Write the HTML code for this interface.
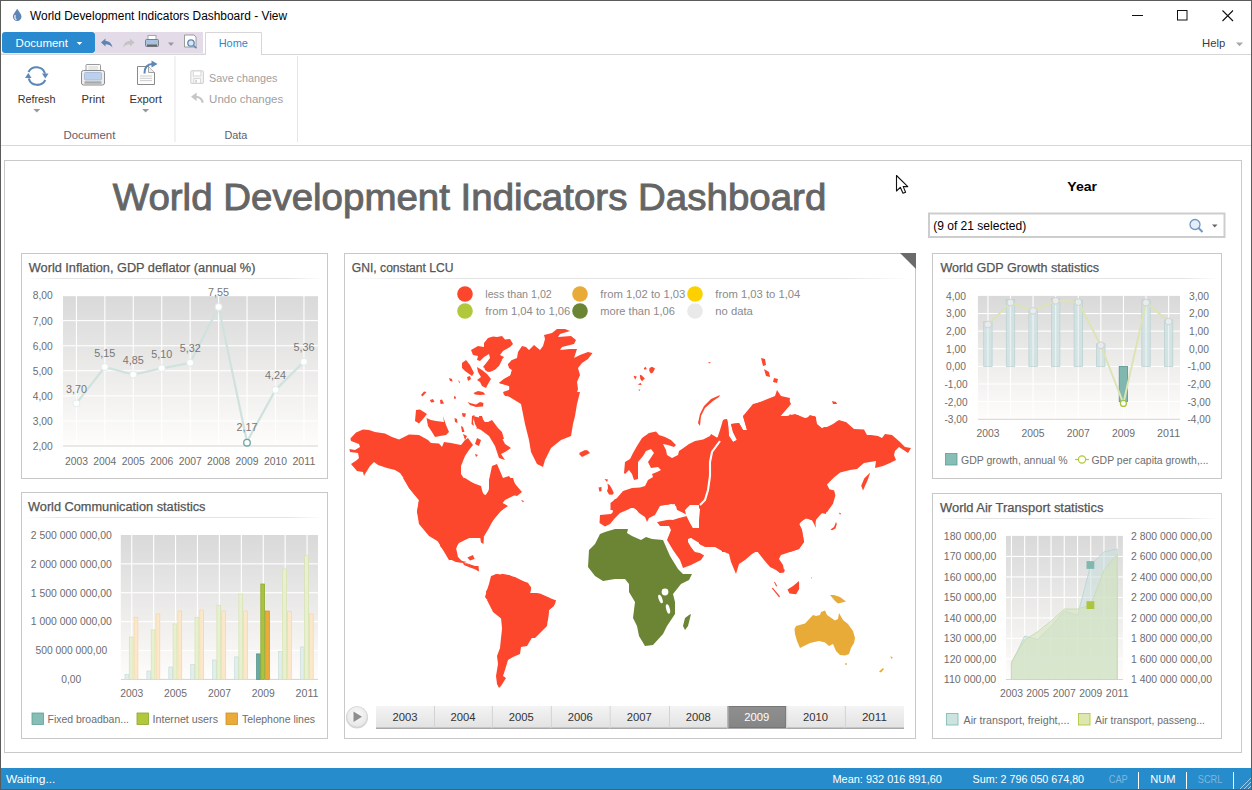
<!DOCTYPE html>
<html><head><meta charset="utf-8">
<style>
*{margin:0;padding:0;box-sizing:border-box}
html,body{width:1252px;height:790px;overflow:hidden;background:#fff;font-family:"Liberation Sans",sans-serif;position:relative}
.a{position:absolute}
svg text{font-family:"Liberation Sans",sans-serif}
</style></head>
<body>
<svg class="a" style="left:0;top:0" width="1252" height="790" viewBox="0 0 1252 790">
<defs>
<linearGradient id="pg" x1="0" y1="0" x2="0" y2="1"><stop offset="0" stop-color="#d9d9d9"/><stop offset="1" stop-color="#fefdfb"/></linearGradient>
<linearGradient id="hl" x1="0" y1="0" x2="1" y2="0"><stop offset="0" stop-color="#e4e4e4" stop-opacity="0"/><stop offset="0.12" stop-color="#e4e4e4"/><stop offset="0.88" stop-color="#e4e4e4"/><stop offset="1" stop-color="#e4e4e4" stop-opacity="0"/></linearGradient>
<linearGradient id="btn" x1="0" y1="0" x2="0" y2="1"><stop offset="0" stop-color="#f4f4f4"/><stop offset="1" stop-color="#e2e2e2"/></linearGradient>
<linearGradient id="btns" x1="0" y1="0" x2="0" y2="1"><stop offset="0" stop-color="#8f8f8f"/><stop offset="1" stop-color="#858585"/></linearGradient>
<radialGradient id="play" cx="0.5" cy="0.4" r="0.6"><stop offset="0" stop-color="#fafafa"/><stop offset="1" stop-color="#e6e6e6"/></radialGradient>
</defs>

<!-- ===== window chrome ===== -->
<rect x="0.5" y="0.5" width="1251" height="789" fill="none" stroke="#5b5b5b"/>
<path d="M17.2,8.8 C15.3,11.8 12.9,14.5 12.9,16.6 A4.3,4.3 0 0 0 21.5,16.6 C21.5,14.5 19.1,11.8 17.2,8.8Z" fill="#5d86b6"/>
<path d="M15.2,15 C14.5,17 15,18.8 16.4,19.8" stroke="#e1ebf5" stroke-width="1.3" fill="none"/>
<text x="30" y="20.4" font-size="12" fill="#000" textLength="257" lengthAdjust="spacingAndGlyphs">World Development Indicators Dashboard - View</text>
<rect x="1132" y="15" width="11" height="1" fill="#111"/>
<rect x="1177.5" y="10.5" width="9.5" height="9.5" fill="none" stroke="#111"/>
<path d="M1222.5,10.5 L1233,21 M1233,10.5 L1222.5,21" stroke="#111" stroke-width="1.1"/>

<!-- QAT -->
<rect x="95" y="32" width="108" height="21" fill="#e3dbe7"/>
<rect x="2" y="32" width="93" height="21" rx="3" fill="#2a8ad0"/>
<text x="15.6" y="46.7" font-size="11.5" fill="#fff" textLength="52.3" lengthAdjust="spacingAndGlyphs">Document</text>
<path d="M76.7,42 L82.3,42 L79.5,45Z" fill="#fff"/>
<rect x="1" y="53" width="204" height="1" fill="#ececec"/>
<!-- undo / redo / print / preview -->
<path d="M101,42.5 L105.5,38.5 L105.5,41 C109,41 111.5,43 112.5,47.5 C110.5,45 108.5,44.3 105.5,44.3 L105.5,46.5Z" fill="#5c84b4"/>
<path d="M134.5,42.5 L130,38.5 L130,41 C126.5,41 124,43 123,47.5 C125,45 127,44.3 130,44.3 L130,46.5Z" fill="#c4c4c4"/>
<rect x="148" y="35.5" width="8" height="4" fill="#fff" stroke="#999" stroke-width="0.8"/>
<rect x="145.5" y="39.5" width="13" height="7" rx="1" fill="#a9c2e2" stroke="#777" stroke-width="0.9"/>
<rect x="147" y="44.5" width="10" height="2" fill="#666"/>
<path d="M168,42.5 L174,42.5 L171,46Z" fill="#9a9a9a"/>
<path d="M184.5,35 L194,35 L196,37 L196,47 L184.5,47Z" fill="#fff" stroke="#888" stroke-width="0.8"/>
<circle cx="191" cy="43" r="3.2" fill="#dbe6f3" stroke="#5c84b4" stroke-width="1.3"/>
<path d="M193.3,45.3 L196.5,48.3" stroke="#5c84b4" stroke-width="1.5"/>
<!-- Home tab -->
<path d="M205.5,55 L205.5,32.5 L261.5,32.5 L261.5,55" fill="#fff" stroke="#d6d6d6"/>
<text x="218.7" y="46.9" font-size="11.5" fill="#2a8ad0" textLength="29.2" lengthAdjust="spacingAndGlyphs">Home</text>
<rect x="262" y="54" width="989" height="1" fill="#d6d6d6"/>
<rect x="1" y="54" width="204" height="1" fill="#d6d6d6"/>
<text x="1202.1" y="47.3" font-size="11.5" fill="#3d3d3d" textLength="23.2" lengthAdjust="spacingAndGlyphs">Help</text>
<path d="M1236,42.5 L1243,42.5 L1239.5,46.2Z" fill="#a8a8a8"/>

<!-- ribbon -->
<rect x="1" y="145" width="1250" height="1" fill="#d9d9d9"/>
<rect x="174.5" y="56" width="1" height="86" fill="#e6e6e6"/>
<rect x="297" y="56" width="1" height="86" fill="#e6e6e6"/>
<!-- refresh icon -->
<g fill="none" stroke="#5b87b9" stroke-width="2.1">
<path d="M28.5,72 A9,9 0 0 1 45,73.5"/>
<path d="M45.3,80 A9,9 0 0 1 28.7,78.5"/>
</g>
<path d="M42,73.5 L48.5,73.5 L45.3,78.5Z" fill="#5b87b9"/>
<path d="M25,78 L31.6,78 L28.3,73Z" fill="#5b87b9"/>
<!-- print icon -->
<rect x="86" y="64.5" width="14.5" height="8" rx="0.8" fill="#fafafa" stroke="#9a9a9a"/>
<path d="M88.5,67 H98 M88.5,69 H98" stroke="#c2c2c2" stroke-width="0.7"/>
<rect x="81.5" y="70.5" width="23" height="14.5" rx="2" fill="#eeeeee" stroke="#8c8c8c"/>
<rect x="84.5" y="72.5" width="17" height="7.5" rx="1" fill="#bcd0ec" stroke="#9fb6d8" stroke-width="0.8"/>
<rect x="84.5" y="81.3" width="17" height="2.4" fill="#a9a9a9"/>
<!-- export icon -->
<path d="M137.5,66.5 L148.5,66.5 L154.5,72.5 L154.5,84.5 L137.5,84.5Z" fill="#fdfdfd" stroke="#8a8a8a"/>
<path d="M148.5,66.5 L148.5,72.5 L154.5,72.5" fill="#eee" stroke="#8a8a8a" stroke-width="0.8"/>
<path d="M140,76 H152 M140,78.3 H152 M140,80.6 H152" stroke="#c0c0c0" stroke-width="0.8"/>
<path d="M144.5,73.5 C144.5,67.5 147.5,64 152.5,64" fill="none" stroke="#5b87b9" stroke-width="2"/>
<path d="M151.5,60.5 L157.5,64 L151.5,67.5Z" fill="#5b87b9"/>
<text x="17.7" y="102.7" font-size="11.5" fill="#333" textLength="37.7" lengthAdjust="spacingAndGlyphs">Refresh</text>
<text x="81.6" y="102.7" font-size="11.5" fill="#333" textLength="23" lengthAdjust="spacingAndGlyphs">Print</text>
<text x="129.5" y="102.7" font-size="11.5" fill="#333" textLength="32.5" lengthAdjust="spacingAndGlyphs">Export</text>
<path d="M33.3,109 L40.3,109 L36.8,112.5Z" fill="#9a9a9a"/>
<path d="M142.1,109 L149.1,109 L145.6,112.5Z" fill="#9a9a9a"/>
<text x="63.4" y="138.5" font-size="11.5" fill="#5f6070" textLength="52" lengthAdjust="spacingAndGlyphs">Document</text>
<text x="224.4" y="138.5" font-size="11.5" fill="#5f6070" textLength="23" lengthAdjust="spacingAndGlyphs">Data</text>
<!-- save / undo small icons -->
<rect x="190.8" y="70.8" width="12.6" height="12.6" rx="1.2" fill="#f6f6f6" stroke="#d3d3d3" stroke-width="1.1"/>
<rect x="193.3" y="71" width="7.6" height="5" fill="#fff" stroke="#d3d3d3" stroke-width="0.9"/>
<rect x="193.8" y="78.6" width="6.8" height="4.6" fill="#fff" stroke="#d3d3d3" stroke-width="0.9"/>
<rect x="195.2" y="79.8" width="1.8" height="2.8" fill="#d3d3d3"/>
<path d="M191,96.8 L196.6,92.6 L196.6,101Z" fill="#c6c6c6"/>
<path d="M195.5,96.8 C199.5,96.8 202,99.3 202.8,102.8" fill="none" stroke="#c6c6c6" stroke-width="2.1"/>
<text x="209.1" y="81.8" font-size="11.5" fill="#a0a0a0" textLength="68.2" lengthAdjust="spacingAndGlyphs">Save changes</text>
<text x="209.1" y="102.7" font-size="11.5" fill="#a0a0a0" textLength="74.1" lengthAdjust="spacingAndGlyphs">Undo changes</text>

<!-- ===== dashboard ===== -->
<rect x="4.5" y="160.5" width="1237" height="592" fill="none" stroke="#c9c9c9"/>
<text x="112.8" y="209.7" font-size="36.5" fill="#656565" stroke="#656565" stroke-width="0.9" textLength="713.5" lengthAdjust="spacingAndGlyphs">World Development Indicators Dashboard</text>
<text x="1067.3" y="190.9" font-size="13" fill="#000" font-weight="bold" textLength="29.7" lengthAdjust="spacingAndGlyphs">Year</text>
<rect x="929" y="213.5" width="295.5" height="23.5" fill="#fff" stroke="#cdcdcd" stroke-width="2"/>
<text x="933.2" y="230" font-size="12" fill="#000" textLength="93" lengthAdjust="spacingAndGlyphs">(9 of 21 selected)</text>
<circle cx="1195" cy="224.5" r="5" fill="#e6edf6" stroke="#6f97c6" stroke-width="1.3"/>
<path d="M1198.5,228 L1202.5,232" stroke="#6f97c6" stroke-width="1.9"/>
<path d="M1212,224.5 L1217.5,224.5 L1214.75,227.5Z" fill="#666"/>

<!-- panel frames -->
<rect x="21.5" y="253.5" width="306" height="225" fill="#fff" stroke="#c8c8c8"/>
<rect x="21.5" y="492.5" width="306" height="246" fill="#fff" stroke="#c8c8c8"/>
<rect x="344.5" y="253.5" width="571" height="485" fill="#fff" stroke="#c8c8c8"/>
<rect x="932.5" y="253.5" width="289" height="225" fill="#fff" stroke="#c8c8c8"/>
<rect x="932.5" y="493.5" width="289" height="245" fill="#fff" stroke="#c8c8c8"/>
<rect x="25" y="278" width="299" height="1" fill="url(#hl)"/>
<rect x="25" y="517" width="299" height="1" fill="url(#hl)"/>
<rect x="348" y="278" width="564" height="1" fill="url(#hl)"/>
<rect x="936" y="278" width="282" height="1" fill="url(#hl)"/>
<rect x="936" y="518" width="282" height="1" fill="url(#hl)"/>
<text x="28.8" y="272" font-size="12" fill="#555" stroke="#555" stroke-width="0.25" textLength="226.6" lengthAdjust="spacingAndGlyphs">World Inflation, GDP deflator (annual %)</text>
<text x="28" y="511.1" font-size="12" fill="#555" stroke="#555" stroke-width="0.25" textLength="177.5" lengthAdjust="spacingAndGlyphs">World Communication statistics</text>
<text x="351.8" y="272" font-size="12" fill="#555" stroke="#555" stroke-width="0.25" textLength="101.7" lengthAdjust="spacingAndGlyphs">GNI, constant LCU</text>
<text x="940.5" y="272" font-size="12" fill="#555" stroke="#555" stroke-width="0.25" textLength="158.5" lengthAdjust="spacingAndGlyphs">World GDP Growth statistics</text>
<text x="940" y="512" font-size="12" fill="#555" stroke="#555" stroke-width="0.25" textLength="163.4" lengthAdjust="spacingAndGlyphs">World Air Transport statistics</text>
<path d="M900,253 L916,253 L916,269Z" fill="#6b6b6b"/>

<path fill="#fd472d" d="M350.4,438.4 356,432.4 363,429.4 369,430 375,432 385,433.4 392,437 399,439.4 409,434.4 419,435 428,440 431,443 439,443.4 442,447 444,442 451,443 461,445 465,440 468,438 473,445 469,450 465,456 461,466 461,474 465,480 481,486 483,494 488,496 489,488 489,480 492,466 497,464 503,478 509,476 515,484 522,492 517,496 509,494 501,502 508,506 499,512 493,520 489,528 483,538 469,538 457,544 453,560 449,560 437,540 429,534 421,520 417,512 419,500 418,499 409,488 405,480 400,473 395,470 387,468 378,465 374,462 370,466 365,474 364,476 363,472 357,471 351,464 357,460 359,458 358,453 350,452 349.4,449 355,450 360,447 359,444 351,441Z"/><path fill="#fd472d" d="M473,416 481,418 485,422 493,426 501,436 505,444 511,448 505,452 501,454 505,460 499,458 495,446 489,436 481,430 477,428 475,424Z"/><path fill="#fd472d" d="M477,438 481,440 479,446 475,444Z"/><path fill="#fd472d" d="M475,454 478,455 476,457Z"/><path fill="#fd472d" d="M463,434 467,436 465,440Z"/><path fill="#fd472d" d="M521,500 524,501 523,502.4Z"/><path fill="#fd472d" d="M462,363 466,360 470,365 474,373 472,376 465,371 462,368Z"/><path fill="#fd472d" d="M484,366 490,362 496,360 502,360 499,366 494,370 488,372 485,370Z"/><path fill="#fd472d" d="M477,367 482,370 487,374 491,379 488,384 486,388 482,386 480,382 477,380 481,377 478,372Z"/><path fill="#fd472d" d="M467,377 470,376 471,379 468,381Z"/><path fill="#fd472d" d="M449,378 452,379 452.5,381.5 450,381Z"/><path fill="#fd472d" d="M458,380 460,382 459.5,383.5Z"/><path fill="#fd472d" d="M473.5,393 478,391 483,392 485.5,394.5 480,395 475,394.5Z"/><path fill="#fd472d" d="M467.5,402 470,403 476,404.5 480,402 483.5,403 483,406.5 476,407 470,405Z"/><path fill="#fd472d" d="M430,400 433,399 434.5,402 431,402.5Z"/><path fill="#fd472d" d="M440,400 442,399.5 444,403.5 440.5,404Z"/><path fill="#fd472d" d="M421,395 424,391.5 426.5,392 422.5,396.5Z"/><path fill="#fd472d" d="M454,396 456,397 455.5,399 454,398.5Z"/><path fill="#fd472d" d="M416,410 420,409.5 427,414 423,419 419,423.5 415,421Z"/><path fill="#fd472d" d="M426.5,418 431,420 436,421 444,422 443,416 446,425 449,432 446,435 440,436 435,437 432,432 428,426Z"/><path fill="#fd472d" d="M462,413 466,413.5 465,417 462.5,416.5Z"/><path fill="#fd472d" d="M454.5,418 457,419 457.5,423 455,422Z"/><path fill="#fd472d" d="M461,426 463,427 464.5,432 462,432Z"/><path fill="#fd472d" d="M472,416 474.5,415 473,422 474,426 471.5,424Z"/><path fill="#fd472d" d="M479,416 482,416 484,422 488,422 492,420 498,428 502,432 504,439 495,439 490,432 485,429 479,428 476,429 480,425Z"/><path fill="#fd472d" d="M508,364 512,360 525,360 525,408 520,400 516,397 505,396 504,392 510,390 509,386 499,383 504,379 511,375 512,370 509,368Z"/><path fill="#fd472d" d="M403,478 409,488 419,500 417,512 419,524 429,536 439,542 447,554 448,558 457,562 465,563 473,567 478,571 475,566 469,564 463,562 458,557 456,548 460,541 469,538 479,538 483,536 489,526 495,518 501,511 507,506 501,505 505,500 513,496 521,492 515,484 513,478 493,478 489,490 485,496 481,490 473,483 465,478Z"/><path fill="#fd472d" d="M480,536.4 484,537.2 483.4,544 481,542.4Z"/><path fill="#fd472d" d="M467.4,557.6 473,555 474.6,559 470,560.4Z"/><path fill="#fd472d" d="M462.5,562.2 468,564.2 473,566 478.5,566 479,571.5 475,569.2 470,567.6 464,565Z"/><path fill="#fd472d" d="M440,540 440,546 447,553 448.5,558.5 456,562 463,562.8 467,562 460,560.5 457,557 456,550 457,543Z"/><path fill="#fd472d" d="M491,578.5 494.5,574.8 496.5,574 500,575.2 502,573.8 510,575.2 518,580 528,582.8 531.2,588 530,593.5 540,593.5 551,598.5 486,598.5 486.2,591 491.5,585Z"/><path fill="#fd472d" d="M471,350 478,346 484,347 484,343 488,338 493,336.5 497,337 502,336 505,339.5 510,339 513,344 510,347 503,351 500,355 504,357 500,362 496,369 490,372 483,367 487,362 490,358 489,354 484,357 480,361 477,360 478,356 473,355Z"/><path fill="#fd472d" d="M508,365 512,360 517,358 518,352 522,346 526,347 529,350 534,345 540,350 543,346 545,339 544,335 552,333 557,329 565,329 570,331 560,334 558,337 571,336 576,340 574,344 562,347 560,350 570,349 577,349 574,358 580,355 588,352 592.5,353 588,359 582,363 578,368 580,375 577,382 578,389 576,396 578,399 516,399 512,396 504,395 503,392 509,390 510,386 499,383 504,379 510,376 512,370Z"/><path fill="#fd472d" d="M505,394 580,392 577,404 575,416 573,424 571,436 561,440 551,448 545,460 543,467 537,464 531,452 529,440 525,424 521,404Z"/><path fill="#fd472d" d="M579,454 587,450 590,453 582,457Z"/><path fill="#fd472d" d="M491,576 497,574 505,575 515,577 525,582 531,587 530,593 537,593 547,597 555,600 554,606 549,610 548,618 547,626 535,638 503,638 501,618 495,612 489,602 485,597 487,590 489,584Z"/><path fill="#fd472d" d="M487,600 556,600 555,604 549,610 548,620 543,626 535,629 533,636 527,646 521,647 520,654 513,657 508,660 505,670 503,676 506,678 501,686 499,688 497,684 496,676 498,664 497,656 500,648 501,638 503,620 493,612 489,604Z"/><path fill="#fd472d" d="M708,362 711,362.4 709.4,363.6Z"/><path fill="#fd472d" d="M761,358 765,359 766,365 763,366Z"/><path fill="#fd472d" d="M764,369 769,372 770,377 766,376Z"/><path fill="#fd472d" d="M774,378 778,379 777,383 773,382Z"/><path fill="#fd472d" d="M832,401 836,402 837,404 833,404Z"/><path fill="#fd472d" d="M649.5,368 652,366.8 655,368.5 653,372.5 651,373.5 649.2,371Z"/><path fill="#fd472d" d="M643.8,368.2 645.5,366.8 646.8,369 644.5,369.7Z"/><path fill="#fd472d" d="M633.5,375.8 636.8,376.5 635.2,379.8Z"/><path fill="#fd472d" d="M639.8,374.8 641.5,375.3 644.8,378.5 642,381.2 640.3,379Z"/><path fill="#fd472d" d="M637.8,384.7 640.5,382.8 641.7,385Z"/><path fill="#fd472d" d="M638.2,389.8 640.2,389.6 639.7,391Z"/><path fill="#fd472d" d="M720,395 711,399 704,406 700,414 698,423 700,426 701,416 705,408 713,401 719,397Z"/><path fill="#fd472d" d="M715,440 723,432 723,420 727,419 728,424 729,436 733,442 737,440 733,432 731,424 739,423 743,430 747,430 743,416 753,412 755,404 765,400 775,396 777,390 781,396 790,398 789,406 779,416 787,416 795,414 805,418 815,416 817,424 823,429 833,424 839,420 845,422 847,424 847,460 835,468 815,480 715,480Z"/><path fill="#fd472d" d="M624,473 625,462 630,459 633,453 637,446 642,438 649,433 656,431.5 659,435 665,437 671,440 676,445 674,447 668,445 663,444 666,450 667,455 672,458 678,455 679,451 682,449 689,444 695,441 703,439.5 710,436 711,434 721,440 721,510 700,510 700,505 687,505 685,510 675,510 675,504 659,505 657,510 637,510 632,507 626,510 610.5,510 610.5,503 617,498 623,491 632,488 640,487.5 645,486 648,480 653,477 652,474 657,472 661,470 658,467 651,468 648,462 654,453 651,449 646,451 643,456 638,462 638,470 638,479 634,480 632,474 629,470 625,474Z"/><path fill="#fd472d" d="M604.5,479 608,479.5 607,482Z"/><path fill="#fd472d" d="M598.5,487.5 601.5,487 601.5,491 599.5,491.8Z"/><path fill="#fd472d" d="M607.5,483.5 610,485.5 612,489 613.8,493 612.5,494.8 609,494.5 607,491 608,488Z"/><path fill="#fd472d" d="M579,453 585,450 589,452 583,456Z"/><path fill="#fd472d" d="M600,515 611,514 613,512 611,504 615,499 706,499 703,502 701,504 690,505 685,510 686,515 683,513 679,511 674,509 675,504 665,505 660,506 655,515 649,518 647,522 645,517 639,513 635,508 631,508 627,510 620,513 615,518 610,524 605,526.5 599.5,523Z"/><path fill="#fd472d" d="M657,522 665,519 673,520 681,517 686,515 690,523 693,528 699,528 700,520 699,515 696,512 701,508 703,502 706,500 721,500 721,547 705,546 701,544 691,538 688,540 690,545 694,551 701,552 705,554 701,560 691,565 683,568 680,560 673,550 667,540 671,530 669,526 660,526Z"/><path fill="#fd472d" d="M699,500 826,500 826,514 822,513 815,520 816,528 812,520 805,518 799,524 802,530 804,542 799,549 790,552 781,555 779,559 783,565 784,570 780,573 776,570 770,567 764,560 757,551 752,554 745,560 739,564 736,574 731,562 729,554 722,551 715,547 705,547 699,544Z"/><path fill="#fd472d" d="M715,445 720,430 723,420 727,419 728,424 729,436 733,442 737,440 733,432 731,424 739,423 743,430 747,430 743,416 753,404 769,400 789,400 791,404 779,418 789,416 790,414 792,416 798,415 802,418 807,418 810,415 816,417 816.5,424 821,429 824,427 832,427.5 837,421 846,422 854,429 864,429.5 867,435 871,435 878,436 882,438 885,434 892,435 900,442 905,447 911,448 908,453 905,451 899,447 895,451 894,455 896,460 890,463 883,466 875,468 876,461 870,462 864,463 857,469 850,470 840.2,472.5 834.2,477.3 827,484.5 829.4,489.3 834.2,490.5 835.4,495.4 833,503.8 827,512.2 821,513.4 816.2,519.4 815,524.2 812.5,520.6 806.5,518.2 800.5,521.8 799.3,524.2 801.7,529 804,542 799,549 790,552 700,552 700,445Z"/><path fill="#fd472d" d="M870.2,472.5 867.8,479.7 863,490.5 861.2,485.7 864.2,478.5Z"/><path fill="#fd472d" d="M830.5,529.5 834,527 836,522 836.8,524 835.5,528.5 832,530.2Z"/><path fill="#fd472d" d="M838.8,512.5 841.2,513.5 840,514.8Z"/><path fill="#fd472d" d="M777,569.5 785,569.5 784,572.5 780,573Z"/><path fill="#fd472d" d="M771.8,588.2 772.8,587.8 780,596.2 779.2,597.5Z"/><path fill="#fd472d" d="M774,582 774.8,581.8 777.2,586 776.2,586.6Z"/><path fill="#fd472d" d="M787.5,589.5 793,586 799,581 799.2,589 796,594.2 789.5,593.5Z"/><path fill="#fd472d" d="M811,577.5 812,577.5 811.8,578.8Z"/><path fill="#6b8535" d="M595,544 600,534 605,532 615,529 628,529 627,533 632,536 641,540 646,537 652,539 663,540 670,556 678,569 683,574 692,574 689,580 681,584 673,594 675,602 675,614 667,626 663,634 653,645 645,646 639,636 637,626 633,618 634,610 635,602 629,592 629,584 625,579 615,579 603,581 595,576 588,567 589,550Z"/><path fill="#6b8535" d="M685,618 689,615 691,614 688,626 685,630 683,626Z"/><path fill="#e8ab37" d="M794.5,629 796,626 805,623.5 813,615 816,616 820,615 821,612 825,610.5 827,615 835,620.5 838,619 839,613 843,620 848,624 853,631 855,638 854,643 851,648 849,654 845,655.5 840,655 836,651 833,644 829,646 825,642.5 819,641 810,643 800,648 797,641 795,634Z"/><path fill="#e8ab37" d="M830,595 834,595 840,597 846,601.5 838,603.5 835,601Z"/><path fill="#e8ab37" d="M879,671.5 883,668 884,669 881,672.5Z"/><path fill="#e8ab37" d="M890.5,656 892.8,657.5 891.2,659Z"/><path fill="#e8ab37" d="M845,663.2 846.8,663.2 846.8,664.8 845,664.8Z"/><path fill="#fff" d="M688,539 691,538 695,542 701,545 705,547 715,547 722,551 722,560 705,556 700,553 695,552 691,547 688,542Z"/><path fill="#fff" d="M657,522 659,512 661,508 671,504 676,506 677,510 685,514 687,516 679,518 667,520Z"/><path fill="#fff" d="M687,508 695,505 700,509 699,520 699,528 693,528 689,520 686,514Z"/><polyline points="720,441 712,452 710,462 710,476 708,490 705,500 700,505" fill="none" stroke="#fff" stroke-width="2.1"/><ellipse cx="665" cy="592" rx="3.4" ry="3.4" fill="#fff"/><ellipse cx="660.5" cy="599" rx="1.8" ry="4.5" fill="#fff" transform="rotate(-20 660.5 599)"/><ellipse cx="668" cy="609" rx="1.8" ry="4.8" fill="#fff" transform="rotate(-15 668 609)"/>
<rect x="63.0" y="295.6" width="255.0" height="150.4" fill="url(#pg)"/>
<rect x="63.0" y="420.4" width="255.0" height="1.1" fill="#fff"/>
<rect x="63.0" y="395.3" width="255.0" height="1.1" fill="#fff"/>
<rect x="63.0" y="370.2" width="255.0" height="1.1" fill="#fff"/>
<rect x="63.0" y="345.2" width="255.0" height="1.1" fill="#fff"/>
<rect x="63.0" y="320.1" width="255.0" height="1.1" fill="#fff"/>
<rect x="63.0" y="295.1" width="255.0" height="1.1" fill="#fff"/>
<rect x="75.9" y="295.6" width="1.1" height="150.4" fill="#fff"/>
<rect x="104.3" y="295.6" width="1.1" height="150.4" fill="#fff"/>
<rect x="132.7" y="295.6" width="1.1" height="150.4" fill="#fff"/>
<rect x="161.2" y="295.6" width="1.1" height="150.4" fill="#fff"/>
<rect x="189.6" y="295.6" width="1.1" height="150.4" fill="#fff"/>
<rect x="218.1" y="295.6" width="1.1" height="150.4" fill="#fff"/>
<rect x="246.5" y="295.6" width="1.1" height="150.4" fill="#fff"/>
<rect x="274.9" y="295.6" width="1.1" height="150.4" fill="#fff"/>
<rect x="303.4" y="295.6" width="1.1" height="150.4" fill="#fff"/>
<rect x="63.0" y="445.5" width="255.0" height="1" fill="#d4d4d4"/>
<text x="52.7" y="299.4" font-size="10.5" fill="#6d6d6d" text-anchor="end" textLength="20.0" lengthAdjust="spacingAndGlyphs">8,00</text>
<text x="52.7" y="324.5" font-size="10.5" fill="#6d6d6d" text-anchor="end" textLength="20.0" lengthAdjust="spacingAndGlyphs">7,00</text>
<text x="52.7" y="349.5" font-size="10.5" fill="#6d6d6d" text-anchor="end" textLength="20.0" lengthAdjust="spacingAndGlyphs">6,00</text>
<text x="52.7" y="374.6" font-size="10.5" fill="#6d6d6d" text-anchor="end" textLength="20.0" lengthAdjust="spacingAndGlyphs">5,00</text>
<text x="52.7" y="399.7" font-size="10.5" fill="#6d6d6d" text-anchor="end" textLength="20.0" lengthAdjust="spacingAndGlyphs">4,00</text>
<text x="52.7" y="424.7" font-size="10.5" fill="#6d6d6d" text-anchor="end" textLength="20.0" lengthAdjust="spacingAndGlyphs">3,00</text>
<text x="52.7" y="449.8" font-size="10.5" fill="#6d6d6d" text-anchor="end" textLength="20.0" lengthAdjust="spacingAndGlyphs">2,00</text>
<polyline points="76.4,403.4 104.8,367.0 133.3,374.6 161.7,368.3 190.2,362.8 218.6,306.9 247.0,441.7 275.5,389.9 303.9,361.8" fill="none" stroke="#cfe2de" stroke-width="2.2" stroke-linejoin="round"/>
<circle cx="76.4" cy="403.4" r="3.5" fill="#fff" stroke="#e2ecea" stroke-width="1"/>
<text x="76.4" y="392.9" font-size="10.5" fill="#777" text-anchor="middle" textLength="21.0" lengthAdjust="spacingAndGlyphs">3,70</text>
<circle cx="104.8" cy="367.0" r="3.5" fill="#fff" stroke="#e2ecea" stroke-width="1"/>
<text x="104.8" y="356.5" font-size="10.5" fill="#777" text-anchor="middle" textLength="21.0" lengthAdjust="spacingAndGlyphs">5,15</text>
<circle cx="133.3" cy="374.6" r="3.5" fill="#fff" stroke="#e2ecea" stroke-width="1"/>
<text x="133.3" y="364.1" font-size="10.5" fill="#777" text-anchor="middle" textLength="21.0" lengthAdjust="spacingAndGlyphs">4,85</text>
<circle cx="161.7" cy="368.3" r="3.5" fill="#fff" stroke="#e2ecea" stroke-width="1"/>
<text x="161.7" y="357.8" font-size="10.5" fill="#777" text-anchor="middle" textLength="21.0" lengthAdjust="spacingAndGlyphs">5,10</text>
<circle cx="190.2" cy="362.8" r="3.5" fill="#fff" stroke="#e2ecea" stroke-width="1"/>
<text x="190.2" y="352.3" font-size="10.5" fill="#777" text-anchor="middle" textLength="21.0" lengthAdjust="spacingAndGlyphs">5,32</text>
<circle cx="218.6" cy="306.9" r="3.5" fill="#fff" stroke="#e2ecea" stroke-width="1"/>
<text x="218.6" y="296.4" font-size="10.5" fill="#777" text-anchor="middle" textLength="21.0" lengthAdjust="spacingAndGlyphs">7,55</text>
<circle cx="247.0" cy="442.7" r="3.3" fill="#fff" stroke="#69a7a0" stroke-width="1.3"/>
<text x="247.0" y="431.2" font-size="10.5" fill="#777" text-anchor="middle" textLength="21.0" lengthAdjust="spacingAndGlyphs">2,17</text>
<circle cx="275.5" cy="389.9" r="3.5" fill="#fff" stroke="#e2ecea" stroke-width="1"/>
<text x="275.5" y="379.4" font-size="10.5" fill="#777" text-anchor="middle" textLength="21.0" lengthAdjust="spacingAndGlyphs">4,24</text>
<circle cx="303.9" cy="361.8" r="3.5" fill="#fff" stroke="#e2ecea" stroke-width="1"/>
<text x="303.9" y="351.3" font-size="10.5" fill="#777" text-anchor="middle" textLength="21.0" lengthAdjust="spacingAndGlyphs">5,36</text>
<text x="76.4" y="465.3" font-size="10.5" fill="#6d6d6d" text-anchor="middle" textLength="23.0" lengthAdjust="spacingAndGlyphs">2003</text>
<text x="104.8" y="465.3" font-size="10.5" fill="#6d6d6d" text-anchor="middle" textLength="23.0" lengthAdjust="spacingAndGlyphs">2004</text>
<text x="133.3" y="465.3" font-size="10.5" fill="#6d6d6d" text-anchor="middle" textLength="23.0" lengthAdjust="spacingAndGlyphs">2005</text>
<text x="161.7" y="465.3" font-size="10.5" fill="#6d6d6d" text-anchor="middle" textLength="23.0" lengthAdjust="spacingAndGlyphs">2006</text>
<text x="190.2" y="465.3" font-size="10.5" fill="#6d6d6d" text-anchor="middle" textLength="23.0" lengthAdjust="spacingAndGlyphs">2007</text>
<text x="218.6" y="465.3" font-size="10.5" fill="#6d6d6d" text-anchor="middle" textLength="23.0" lengthAdjust="spacingAndGlyphs">2008</text>
<text x="247.0" y="465.3" font-size="10.5" fill="#6d6d6d" text-anchor="middle" textLength="23.0" lengthAdjust="spacingAndGlyphs">2009</text>
<text x="275.5" y="465.3" font-size="10.5" fill="#6d6d6d" text-anchor="middle" textLength="23.0" lengthAdjust="spacingAndGlyphs">2010</text>
<text x="303.9" y="465.3" font-size="10.5" fill="#6d6d6d" text-anchor="middle" textLength="23.0" lengthAdjust="spacingAndGlyphs">2011</text>
<rect x="120.8" y="535.0" width="197.2" height="144.4" fill="url(#pg)"/>
<rect x="120.8" y="563.3" width="197.2" height="1.1" fill="#fff"/>
<rect x="120.8" y="592.2" width="197.2" height="1.1" fill="#fff"/>
<rect x="120.8" y="621.1" width="197.2" height="1.1" fill="#fff"/>
<rect x="120.8" y="650.0" width="197.2" height="1.1" fill="#fff"/>
<rect x="131.2" y="535.0" width="1.1" height="144.4" fill="#fff"/>
<rect x="153.1" y="535.0" width="1.1" height="144.4" fill="#fff"/>
<rect x="175.0" y="535.0" width="1.1" height="144.4" fill="#fff"/>
<rect x="196.9" y="535.0" width="1.1" height="144.4" fill="#fff"/>
<rect x="218.8" y="535.0" width="1.1" height="144.4" fill="#fff"/>
<rect x="240.8" y="535.0" width="1.1" height="144.4" fill="#fff"/>
<rect x="262.7" y="535.0" width="1.1" height="144.4" fill="#fff"/>
<rect x="284.6" y="535.0" width="1.1" height="144.4" fill="#fff"/>
<rect x="306.5" y="535.0" width="1.1" height="144.4" fill="#fff"/>
<rect x="120.8" y="678.9" width="197.2" height="1" fill="#d4d4d4"/>
<text x="71.3" y="538.8" font-size="10.5" fill="#6d6d6d" text-anchor="middle" textLength="81.0" lengthAdjust="spacingAndGlyphs">2 500 000 000,00</text>
<text x="71.3" y="567.7" font-size="10.5" fill="#6d6d6d" text-anchor="middle" textLength="81.0" lengthAdjust="spacingAndGlyphs">2 000 000 000,00</text>
<text x="71.3" y="596.6" font-size="10.5" fill="#6d6d6d" text-anchor="middle" textLength="81.0" lengthAdjust="spacingAndGlyphs">1 500 000 000,00</text>
<text x="71.3" y="625.4" font-size="10.5" fill="#6d6d6d" text-anchor="middle" textLength="81.0" lengthAdjust="spacingAndGlyphs">1 000 000 000,00</text>
<text x="71.3" y="654.3" font-size="10.5" fill="#6d6d6d" text-anchor="middle" textLength="71.8" lengthAdjust="spacingAndGlyphs">500 000 000,00</text>
<text x="71.3" y="683.2" font-size="10.5" fill="#6d6d6d" text-anchor="middle" textLength="20.0" lengthAdjust="spacingAndGlyphs">0,00</text>
<rect x="125.0" y="674.3" width="3.8" height="5.1" fill="#e1eeec" stroke="#c9dedb" stroke-width="0.7"/>
<rect x="129.3" y="637.0" width="3.8" height="42.4" fill="#e9f0d2" stroke="#d5e2ac" stroke-width="0.7"/>
<rect x="134.1" y="617.3" width="3.8" height="62.1" fill="#fbe8cb" stroke="#f3d5a6" stroke-width="0.7"/>
<rect x="146.9" y="671.0" width="3.8" height="8.4" fill="#e1eeec" stroke="#c9dedb" stroke-width="0.7"/>
<rect x="151.2" y="629.9" width="3.8" height="49.5" fill="#e9f0d2" stroke="#d5e2ac" stroke-width="0.7"/>
<rect x="156.0" y="614.0" width="3.8" height="65.4" fill="#fbe8cb" stroke="#f3d5a6" stroke-width="0.7"/>
<rect x="168.8" y="667.0" width="3.8" height="12.4" fill="#e1eeec" stroke="#c9dedb" stroke-width="0.7"/>
<rect x="173.1" y="623.9" width="3.8" height="55.5" fill="#e9f0d2" stroke="#d5e2ac" stroke-width="0.7"/>
<rect x="177.9" y="611.0" width="3.8" height="68.4" fill="#fbe8cb" stroke="#f3d5a6" stroke-width="0.7"/>
<rect x="190.7" y="664.4" width="3.8" height="15.0" fill="#e1eeec" stroke="#c9dedb" stroke-width="0.7"/>
<rect x="195.0" y="617.3" width="3.8" height="62.1" fill="#e9f0d2" stroke="#d5e2ac" stroke-width="0.7"/>
<rect x="199.8" y="610.0" width="3.8" height="69.4" fill="#fbe8cb" stroke="#f3d5a6" stroke-width="0.7"/>
<rect x="212.6" y="660.0" width="3.8" height="19.4" fill="#e1eeec" stroke="#c9dedb" stroke-width="0.7"/>
<rect x="216.9" y="605.2" width="3.8" height="74.2" fill="#e9f0d2" stroke="#d5e2ac" stroke-width="0.7"/>
<rect x="221.7" y="611.0" width="3.8" height="68.4" fill="#fbe8cb" stroke="#f3d5a6" stroke-width="0.7"/>
<rect x="234.6" y="656.9" width="3.8" height="22.5" fill="#e1eeec" stroke="#c9dedb" stroke-width="0.7"/>
<rect x="238.9" y="594.0" width="3.8" height="85.4" fill="#e9f0d2" stroke="#d5e2ac" stroke-width="0.7"/>
<rect x="243.7" y="611.0" width="3.8" height="68.4" fill="#fbe8cb" stroke="#f3d5a6" stroke-width="0.7"/>
<rect x="256.5" y="653.9" width="3.8" height="25.5" fill="#67aaa3" stroke="#4f8f89" stroke-width="0.7"/>
<rect x="260.8" y="584.0" width="3.8" height="95.4" fill="#a9c43c" stroke="#8aa52a" stroke-width="0.7"/>
<rect x="265.6" y="611.0" width="3.8" height="68.4" fill="#eaab3a" stroke="#cf8f22" stroke-width="0.7"/>
<rect x="278.4" y="651.3" width="3.8" height="28.1" fill="#e1eeec" stroke="#c9dedb" stroke-width="0.7"/>
<rect x="282.7" y="569.0" width="3.8" height="110.4" fill="#e9f0d2" stroke="#d5e2ac" stroke-width="0.7"/>
<rect x="287.5" y="611.7" width="3.8" height="67.7" fill="#fbe8cb" stroke="#f3d5a6" stroke-width="0.7"/>
<rect x="300.3" y="647.0" width="3.8" height="32.4" fill="#e1eeec" stroke="#c9dedb" stroke-width="0.7"/>
<rect x="304.6" y="555.8" width="3.8" height="123.6" fill="#e9f0d2" stroke="#d5e2ac" stroke-width="0.7"/>
<rect x="309.4" y="614.0" width="3.8" height="65.4" fill="#fbe8cb" stroke="#f3d5a6" stroke-width="0.7"/>
<text x="131.8" y="697.0" font-size="10.5" fill="#6d6d6d" text-anchor="middle" textLength="23.0" lengthAdjust="spacingAndGlyphs">2003</text>
<text x="175.6" y="697.0" font-size="10.5" fill="#6d6d6d" text-anchor="middle" textLength="23.0" lengthAdjust="spacingAndGlyphs">2005</text>
<text x="219.4" y="697.0" font-size="10.5" fill="#6d6d6d" text-anchor="middle" textLength="23.0" lengthAdjust="spacingAndGlyphs">2007</text>
<text x="263.2" y="697.0" font-size="10.5" fill="#6d6d6d" text-anchor="middle" textLength="23.0" lengthAdjust="spacingAndGlyphs">2009</text>
<text x="307.0" y="697.0" font-size="10.5" fill="#6d6d6d" text-anchor="middle" textLength="23.0" lengthAdjust="spacingAndGlyphs">2011</text>
<rect x="32" y="713" width="11.5" height="11.5" fill="#86bdb5" stroke="#5e9e98" stroke-width="0.8"/>
<text x="47.5" y="723.0" font-size="10.5" fill="#6d6d6d" textLength="81.5" lengthAdjust="spacingAndGlyphs">Fixed broadban...</text>
<rect x="137" y="713" width="11.5" height="11.5" fill="#b2c83c" stroke="#8aa52a" stroke-width="0.8"/>
<text x="152.5" y="723.0" font-size="10.5" fill="#6d6d6d" textLength="65.5" lengthAdjust="spacingAndGlyphs">Internet users</text>
<rect x="226" y="713" width="11.5" height="11.5" fill="#eaab3a" stroke="#cf8f22" stroke-width="0.8"/>
<text x="242.0" y="723.0" font-size="10.5" fill="#6d6d6d" textLength="73.0" lengthAdjust="spacingAndGlyphs">Telephone lines</text>
<rect x="977.9" y="295.9" width="202.1" height="123.4" fill="url(#pg)"/>
<rect x="977.9" y="313.0" width="202.1" height="1.1" fill="#fff"/>
<rect x="977.9" y="330.6" width="202.1" height="1.1" fill="#fff"/>
<rect x="977.9" y="348.2" width="202.1" height="1.1" fill="#fff"/>
<rect x="977.9" y="365.9" width="202.1" height="1.1" fill="#fff"/>
<rect x="977.9" y="383.5" width="202.1" height="1.1" fill="#fff"/>
<rect x="977.9" y="401.1" width="202.1" height="1.1" fill="#fff"/>
<rect x="987.4" y="295.9" width="1.1" height="123.4" fill="#fff"/>
<rect x="1009.9" y="295.9" width="1.1" height="123.4" fill="#fff"/>
<rect x="1032.5" y="295.9" width="1.1" height="123.4" fill="#fff"/>
<rect x="1055.1" y="295.9" width="1.1" height="123.4" fill="#fff"/>
<rect x="1077.7" y="295.9" width="1.1" height="123.4" fill="#fff"/>
<rect x="1100.3" y="295.9" width="1.1" height="123.4" fill="#fff"/>
<rect x="1122.9" y="295.9" width="1.1" height="123.4" fill="#fff"/>
<rect x="1145.5" y="295.9" width="1.1" height="123.4" fill="#fff"/>
<rect x="1168.1" y="295.9" width="1.1" height="123.4" fill="#fff"/>
<rect x="977.9" y="418.8" width="202.1" height="1" fill="#d4d4d4"/>
<text x="956.0" y="299.7" font-size="10.5" fill="#6d6d6d" text-anchor="middle" textLength="20.0" lengthAdjust="spacingAndGlyphs">4,00</text>
<text x="1199.0" y="299.7" font-size="10.5" fill="#6d6d6d" text-anchor="middle" textLength="20.0" lengthAdjust="spacingAndGlyphs">3,00</text>
<text x="956.0" y="317.3" font-size="10.5" fill="#6d6d6d" text-anchor="middle" textLength="20.0" lengthAdjust="spacingAndGlyphs">3,00</text>
<text x="1199.0" y="317.3" font-size="10.5" fill="#6d6d6d" text-anchor="middle" textLength="20.0" lengthAdjust="spacingAndGlyphs">2,00</text>
<text x="956.0" y="335.0" font-size="10.5" fill="#6d6d6d" text-anchor="middle" textLength="20.0" lengthAdjust="spacingAndGlyphs">2,00</text>
<text x="1199.0" y="335.0" font-size="10.5" fill="#6d6d6d" text-anchor="middle" textLength="20.0" lengthAdjust="spacingAndGlyphs">1,00</text>
<text x="956.0" y="352.6" font-size="10.5" fill="#6d6d6d" text-anchor="middle" textLength="20.0" lengthAdjust="spacingAndGlyphs">1,00</text>
<text x="1199.0" y="352.6" font-size="10.5" fill="#6d6d6d" text-anchor="middle" textLength="20.0" lengthAdjust="spacingAndGlyphs">0,00</text>
<text x="956.0" y="370.2" font-size="10.5" fill="#6d6d6d" text-anchor="middle" textLength="20.0" lengthAdjust="spacingAndGlyphs">0,00</text>
<text x="1199.0" y="370.2" font-size="10.5" fill="#6d6d6d" text-anchor="middle" textLength="23.0" lengthAdjust="spacingAndGlyphs">-1,00</text>
<text x="956.0" y="387.8" font-size="10.5" fill="#6d6d6d" text-anchor="middle" textLength="23.0" lengthAdjust="spacingAndGlyphs">-1,00</text>
<text x="1199.0" y="387.8" font-size="10.5" fill="#6d6d6d" text-anchor="middle" textLength="23.0" lengthAdjust="spacingAndGlyphs">-2,00</text>
<text x="956.0" y="405.5" font-size="10.5" fill="#6d6d6d" text-anchor="middle" textLength="23.0" lengthAdjust="spacingAndGlyphs">-2,00</text>
<text x="1199.0" y="405.5" font-size="10.5" fill="#6d6d6d" text-anchor="middle" textLength="23.0" lengthAdjust="spacingAndGlyphs">-3,00</text>
<text x="956.0" y="423.1" font-size="10.5" fill="#6d6d6d" text-anchor="middle" textLength="23.0" lengthAdjust="spacingAndGlyphs">-3,00</text>
<text x="1199.0" y="423.1" font-size="10.5" fill="#6d6d6d" text-anchor="middle" textLength="23.0" lengthAdjust="spacingAndGlyphs">-4,00</text>
<rect x="983.7" y="321.5" width="8.4" height="45.0" fill="#cfe0e0" fill-opacity="0.85" stroke="#bcd3d2" stroke-width="0.8"/>
<rect x="987.2" y="321.5" width="1.3" height="45.0" fill="#eaf2f2"/>
<rect x="1006.3" y="299.4" width="8.4" height="67.0" fill="#cfe0e0" fill-opacity="0.85" stroke="#bcd3d2" stroke-width="0.8"/>
<rect x="1009.8" y="299.4" width="1.3" height="67.0" fill="#eaf2f2"/>
<rect x="1028.9" y="308.8" width="8.4" height="57.6" fill="#cfe0e0" fill-opacity="0.85" stroke="#bcd3d2" stroke-width="0.8"/>
<rect x="1032.4" y="308.8" width="1.3" height="57.6" fill="#eaf2f2"/>
<rect x="1051.5" y="298.4" width="8.4" height="68.0" fill="#cfe0e0" fill-opacity="0.85" stroke="#bcd3d2" stroke-width="0.8"/>
<rect x="1055.0" y="298.4" width="1.3" height="68.0" fill="#eaf2f2"/>
<rect x="1074.1" y="300.3" width="8.4" height="66.1" fill="#cfe0e0" fill-opacity="0.85" stroke="#bcd3d2" stroke-width="0.8"/>
<rect x="1077.6" y="300.3" width="1.3" height="66.1" fill="#eaf2f2"/>
<rect x="1096.6" y="343.8" width="8.4" height="22.6" fill="#cfe0e0" fill-opacity="0.85" stroke="#bcd3d2" stroke-width="0.8"/>
<rect x="1100.2" y="343.8" width="1.3" height="22.6" fill="#eaf2f2"/>
<rect x="1119.2" y="366.4" width="8.4" height="35.3" fill="#80b8b0" stroke="#5a958e" stroke-width="0.8"/>
<rect x="1141.8" y="299.8" width="8.4" height="66.6" fill="#cfe0e0" fill-opacity="0.85" stroke="#bcd3d2" stroke-width="0.8"/>
<rect x="1145.4" y="299.8" width="1.3" height="66.6" fill="#eaf2f2"/>
<rect x="1164.4" y="319.9" width="8.4" height="46.5" fill="#cfe0e0" fill-opacity="0.85" stroke="#bcd3d2" stroke-width="0.8"/>
<rect x="1168.0" y="319.9" width="1.3" height="46.5" fill="#eaf2f2"/>
<polyline points="987.9,324.5 1010.5,302.6 1033.1,310.9 1055.7,300.8 1078.3,302.1 1100.8,345.3 1123.4,403.4 1146.0,302.6 1168.6,321.5" fill="none" stroke="#dde4b4" stroke-width="2" stroke-linejoin="round"/>
<circle cx="987.9" cy="324.5" r="3.4" fill="#e4eeee" stroke="#d9c9cf" stroke-width="0.9"/>
<circle cx="1010.5" cy="302.6" r="3.4" fill="#e4eeee" stroke="#d9c9cf" stroke-width="0.9"/>
<circle cx="1033.1" cy="310.9" r="3.4" fill="#e4eeee" stroke="#d9c9cf" stroke-width="0.9"/>
<circle cx="1055.7" cy="300.8" r="3.4" fill="#e4eeee" stroke="#d9c9cf" stroke-width="0.9"/>
<circle cx="1078.3" cy="302.1" r="3.4" fill="#e4eeee" stroke="#d9c9cf" stroke-width="0.9"/>
<circle cx="1100.8" cy="345.3" r="3.4" fill="#e4eeee" stroke="#d9c9cf" stroke-width="0.9"/>
<circle cx="1123.4" cy="403.4" r="3" fill="#fff" stroke="#a9c43c" stroke-width="1.2"/>
<circle cx="1146.0" cy="302.6" r="3.4" fill="#e4eeee" stroke="#d9c9cf" stroke-width="0.9"/>
<circle cx="1168.6" cy="321.5" r="3.4" fill="#e4eeee" stroke="#d9c9cf" stroke-width="0.9"/>
<text x="987.9" y="436.6" font-size="10.5" fill="#6d6d6d" text-anchor="middle" textLength="23.0" lengthAdjust="spacingAndGlyphs">2003</text>
<text x="1033.1" y="436.6" font-size="10.5" fill="#6d6d6d" text-anchor="middle" textLength="23.0" lengthAdjust="spacingAndGlyphs">2005</text>
<text x="1078.3" y="436.6" font-size="10.5" fill="#6d6d6d" text-anchor="middle" textLength="23.0" lengthAdjust="spacingAndGlyphs">2007</text>
<text x="1123.4" y="436.6" font-size="10.5" fill="#6d6d6d" text-anchor="middle" textLength="23.0" lengthAdjust="spacingAndGlyphs">2009</text>
<text x="1168.6" y="436.6" font-size="10.5" fill="#6d6d6d" text-anchor="middle" textLength="23.0" lengthAdjust="spacingAndGlyphs">2011</text>
<rect x="945.5" y="453.5" width="11.5" height="11.5" fill="#86bdb5" stroke="#5e9e98" stroke-width="0.8"/>
<text x="961.0" y="463.5" font-size="10.5" fill="#6d6d6d" textLength="106.5" lengthAdjust="spacingAndGlyphs">GDP growth, annual %</text>
<path d="M1075,459.5 H1089" stroke="#b2c83c" stroke-width="1.2"/><circle cx="1082" cy="459.5" r="3.6" fill="#fff" stroke="#b2c83c" stroke-width="1.2"/>
<text x="1091.5" y="463.5" font-size="10.5" fill="#6d6d6d" textLength="117.0" lengthAdjust="spacingAndGlyphs">GDP per capita growth,...</text>
<rect x="1006.0" y="535.9" width="116.9" height="143.6" fill="url(#pg)"/>
<rect x="1006.0" y="555.9" width="116.9" height="1.1" fill="#fff"/>
<rect x="1006.0" y="576.4" width="116.9" height="1.1" fill="#fff"/>
<rect x="1006.0" y="596.9" width="116.9" height="1.1" fill="#fff"/>
<rect x="1006.0" y="617.4" width="116.9" height="1.1" fill="#fff"/>
<rect x="1006.0" y="637.9" width="116.9" height="1.1" fill="#fff"/>
<rect x="1006.0" y="658.4" width="116.9" height="1.1" fill="#fff"/>
<rect x="1010.9" y="535.9" width="1.1" height="143.6" fill="#fff"/>
<rect x="1024.1" y="535.9" width="1.1" height="143.6" fill="#fff"/>
<rect x="1037.3" y="535.9" width="1.1" height="143.6" fill="#fff"/>
<rect x="1050.5" y="535.9" width="1.1" height="143.6" fill="#fff"/>
<rect x="1063.7" y="535.9" width="1.1" height="143.6" fill="#fff"/>
<rect x="1077.0" y="535.9" width="1.1" height="143.6" fill="#fff"/>
<rect x="1090.2" y="535.9" width="1.1" height="143.6" fill="#fff"/>
<rect x="1103.4" y="535.9" width="1.1" height="143.6" fill="#fff"/>
<rect x="1116.6" y="535.9" width="1.1" height="143.6" fill="#fff"/>
<rect x="1006.0" y="679.0" width="116.9" height="1" fill="#d4d4d4"/>
<text x="996.3" y="539.7" font-size="10.5" fill="#6d6d6d" text-anchor="end" textLength="52.5" lengthAdjust="spacingAndGlyphs">180 000,00</text>
<text x="1131.0" y="539.7" font-size="10.5" fill="#6d6d6d" textLength="81.0" lengthAdjust="spacingAndGlyphs">2 800 000 000,00</text>
<text x="996.3" y="560.2" font-size="10.5" fill="#6d6d6d" text-anchor="end" textLength="52.5" lengthAdjust="spacingAndGlyphs">170 000,00</text>
<text x="1131.0" y="560.2" font-size="10.5" fill="#6d6d6d" textLength="81.0" lengthAdjust="spacingAndGlyphs">2 600 000 000,00</text>
<text x="996.3" y="580.7" font-size="10.5" fill="#6d6d6d" text-anchor="end" textLength="52.5" lengthAdjust="spacingAndGlyphs">160 000,00</text>
<text x="1131.0" y="580.7" font-size="10.5" fill="#6d6d6d" textLength="81.0" lengthAdjust="spacingAndGlyphs">2 400 000 000,00</text>
<text x="996.3" y="601.2" font-size="10.5" fill="#6d6d6d" text-anchor="end" textLength="52.5" lengthAdjust="spacingAndGlyphs">150 000,00</text>
<text x="1131.0" y="601.2" font-size="10.5" fill="#6d6d6d" textLength="81.0" lengthAdjust="spacingAndGlyphs">2 200 000 000,00</text>
<text x="996.3" y="621.8" font-size="10.5" fill="#6d6d6d" text-anchor="end" textLength="52.5" lengthAdjust="spacingAndGlyphs">140 000,00</text>
<text x="1131.0" y="621.8" font-size="10.5" fill="#6d6d6d" textLength="81.0" lengthAdjust="spacingAndGlyphs">2 000 000 000,00</text>
<text x="996.3" y="642.3" font-size="10.5" fill="#6d6d6d" text-anchor="end" textLength="52.5" lengthAdjust="spacingAndGlyphs">130 000,00</text>
<text x="1131.0" y="642.3" font-size="10.5" fill="#6d6d6d" textLength="81.0" lengthAdjust="spacingAndGlyphs">1 800 000 000,00</text>
<text x="996.3" y="662.8" font-size="10.5" fill="#6d6d6d" text-anchor="end" textLength="52.5" lengthAdjust="spacingAndGlyphs">120 000,00</text>
<text x="1131.0" y="662.8" font-size="10.5" fill="#6d6d6d" textLength="81.0" lengthAdjust="spacingAndGlyphs">1 600 000 000,00</text>
<text x="996.3" y="683.3" font-size="10.5" fill="#6d6d6d" text-anchor="end" textLength="52.5" lengthAdjust="spacingAndGlyphs">110 000,00</text>
<text x="1131.0" y="683.3" font-size="10.5" fill="#6d6d6d" textLength="81.0" lengthAdjust="spacingAndGlyphs">1 400 000 000,00</text>
<polygon points="1011.4,679.5 1011.4,664.0 1024.6,636.0 1037.8,639.5 1051.1,626.0 1064.3,611.0 1077.5,615.4 1090.7,565.0 1103.9,551.9 1117.2,548.9 1117.2,679.5" fill="#c9dfdc" fill-opacity="0.55" stroke="#bcd6d3" stroke-width="0.9"/>
<polygon points="1011.4,679.5 1011.4,661.7 1024.6,640.0 1037.8,631.6 1051.1,621.0 1064.3,609.0 1077.5,609.0 1090.7,605.1 1103.9,570.5 1117.2,554.3 1117.2,679.5" fill="#d3e2bd" fill-opacity="0.6" stroke="#cadbb0" stroke-width="0.9"/>
<rect x="1086.5" y="561.1" width="7.8" height="7.8" fill="#80b8b0"/>
<rect x="1086.5" y="601.2" width="7.8" height="7.8" fill="#adc43e"/>
<text x="1011.4" y="697.0" font-size="10.5" fill="#6d6d6d" text-anchor="middle" textLength="23.0" lengthAdjust="spacingAndGlyphs">2003</text>
<text x="1037.8" y="697.0" font-size="10.5" fill="#6d6d6d" text-anchor="middle" textLength="23.0" lengthAdjust="spacingAndGlyphs">2005</text>
<text x="1064.3" y="697.0" font-size="10.5" fill="#6d6d6d" text-anchor="middle" textLength="23.0" lengthAdjust="spacingAndGlyphs">2007</text>
<text x="1090.7" y="697.0" font-size="10.5" fill="#6d6d6d" text-anchor="middle" textLength="23.0" lengthAdjust="spacingAndGlyphs">2009</text>
<text x="1117.2" y="697.0" font-size="10.5" fill="#6d6d6d" text-anchor="middle" textLength="23.0" lengthAdjust="spacingAndGlyphs">2011</text>
<rect x="946.5" y="713.5" width="11.5" height="11.5" fill="#cde3e0" stroke="#86bdb5" stroke-width="0.9"/>
<text x="963.5" y="723.5" font-size="10.5" fill="#6d6d6d" textLength="106.0" lengthAdjust="spacingAndGlyphs">Air transport, freight,...</text>
<rect x="1078.5" y="713.5" width="11.5" height="11.5" fill="#dde8b0" stroke="#b2c83c" stroke-width="0.9"/>
<text x="1095.0" y="723.5" font-size="10.5" fill="#6d6d6d" textLength="110.0" lengthAdjust="spacingAndGlyphs">Air transport, passeng...</text>
<circle cx="465.0" cy="294.0" r="7.8" fill="#fd472d"/>
<text x="485.3" y="297.6" font-size="11.5" fill="#8a8a8a" textLength="66.5" lengthAdjust="spacingAndGlyphs">less than 1,02</text>
<circle cx="580.0" cy="294.0" r="7.8" fill="#e8ab37"/>
<text x="600.3" y="297.6" font-size="11.5" fill="#8a8a8a" textLength="85.0" lengthAdjust="spacingAndGlyphs">from 1,02 to 1,03</text>
<circle cx="695.0" cy="294.0" r="7.8" fill="#fdd100"/>
<text x="715.3" y="297.6" font-size="11.5" fill="#8a8a8a" textLength="85.0" lengthAdjust="spacingAndGlyphs">from 1,03 to 1,04</text>
<circle cx="465.0" cy="311.0" r="7.8" fill="#b2c83c"/>
<text x="485.3" y="314.6" font-size="11.5" fill="#8a8a8a" textLength="85.0" lengthAdjust="spacingAndGlyphs">from 1,04 to 1,06</text>
<circle cx="580.0" cy="311.0" r="7.8" fill="#6b8535"/>
<text x="600.3" y="314.6" font-size="11.5" fill="#8a8a8a" textLength="74.5" lengthAdjust="spacingAndGlyphs">more than 1,06</text>
<circle cx="695.0" cy="311.0" r="7.8" fill="#e9e9e9"/>
<text x="715.3" y="314.6" font-size="11.5" fill="#8a8a8a" textLength="37.5" lengthAdjust="spacingAndGlyphs">no data</text>
<circle cx="357" cy="717.5" r="11" fill="#d6d6d6"/>
<circle cx="357" cy="716.8" r="10.3" fill="url(#play)" stroke="#d0d0d0" stroke-width="0.6"/>
<path d="M353.5,711.5 L362,716.8 L353.5,722Z" fill="#8e8e8e"/>
<rect x="376.0" y="706" width="58.0" height="22" fill="url(#btn)"/>
<rect x="376.0" y="727.5" width="58.0" height="1.5" fill="#a9a9a9"/>
<text x="405.0" y="720.8" font-size="11.5" fill="#333" text-anchor="middle" textLength="25.0" lengthAdjust="spacingAndGlyphs">2003</text>
<rect x="434.0" y="706" width="57.8" height="22" fill="url(#btn)"/>
<rect x="434.0" y="727.5" width="57.8" height="1.5" fill="#a9a9a9"/>
<rect x="434.0" y="706" width="1" height="22" fill="#d2d2d2"/>
<text x="462.9" y="720.8" font-size="11.5" fill="#333" text-anchor="middle" textLength="25.0" lengthAdjust="spacingAndGlyphs">2004</text>
<rect x="491.8" y="706" width="59.0" height="22" fill="url(#btn)"/>
<rect x="491.8" y="727.5" width="59.0" height="1.5" fill="#a9a9a9"/>
<rect x="491.8" y="706" width="1" height="22" fill="#d2d2d2"/>
<text x="521.3" y="720.8" font-size="11.5" fill="#333" text-anchor="middle" textLength="25.0" lengthAdjust="spacingAndGlyphs">2005</text>
<rect x="550.8" y="706" width="58.8" height="22" fill="url(#btn)"/>
<rect x="550.8" y="727.5" width="58.8" height="1.5" fill="#a9a9a9"/>
<rect x="550.8" y="706" width="1" height="22" fill="#d2d2d2"/>
<text x="580.2" y="720.8" font-size="11.5" fill="#333" text-anchor="middle" textLength="25.0" lengthAdjust="spacingAndGlyphs">2006</text>
<rect x="609.6" y="706" width="59.4" height="22" fill="url(#btn)"/>
<rect x="609.6" y="727.5" width="59.4" height="1.5" fill="#a9a9a9"/>
<rect x="609.6" y="706" width="1" height="22" fill="#d2d2d2"/>
<text x="639.3" y="720.8" font-size="11.5" fill="#333" text-anchor="middle" textLength="25.0" lengthAdjust="spacingAndGlyphs">2007</text>
<rect x="669.0" y="706" width="58.4" height="22" fill="url(#btn)"/>
<rect x="669.0" y="727.5" width="58.4" height="1.5" fill="#a9a9a9"/>
<rect x="669.0" y="706" width="1" height="22" fill="#d2d2d2"/>
<text x="698.2" y="720.8" font-size="11.5" fill="#333" text-anchor="middle" textLength="25.0" lengthAdjust="spacingAndGlyphs">2008</text>
<rect x="727.4" y="706" width="58.8" height="22" fill="url(#btns)"/>
<rect x="727.4" y="727.5" width="58.8" height="1.5" fill="#a9a9a9"/>
<rect x="727.9" y="706.5" width="57.8" height="21" fill="none" stroke="#777"/>
<rect x="727.4" y="706" width="1" height="22" fill="#d2d2d2"/>
<text x="756.8" y="720.8" font-size="11.5" fill="#fff" text-anchor="middle" textLength="25.0" lengthAdjust="spacingAndGlyphs">2009</text>
<rect x="786.2" y="706" width="58.6" height="22" fill="url(#btn)"/>
<rect x="786.2" y="727.5" width="58.6" height="1.5" fill="#a9a9a9"/>
<rect x="786.2" y="706" width="1" height="22" fill="#d2d2d2"/>
<text x="815.5" y="720.8" font-size="11.5" fill="#333" text-anchor="middle" textLength="25.0" lengthAdjust="spacingAndGlyphs">2010</text>
<rect x="844.8" y="706" width="59.2" height="22" fill="url(#btn)"/>
<rect x="844.8" y="727.5" width="59.2" height="1.5" fill="#a9a9a9"/>
<rect x="844.8" y="706" width="1" height="22" fill="#d2d2d2"/>
<text x="874.4" y="720.8" font-size="11.5" fill="#333" text-anchor="middle" textLength="25.0" lengthAdjust="spacingAndGlyphs">2011</text>

<path d="M896.5,175.5 L896.5,191 L900.3,187.3 L903,193.3 L905.6,192.2 L903.2,186.6 L907.8,186.6Z" fill="#fff" stroke="#111" stroke-width="1.1" stroke-linejoin="round"/>

<!-- ===== status bar ===== -->
<rect x="1" y="768" width="1250" height="21" fill="#278ccb"/>
<text x="6" y="783.3" font-size="11.5" fill="#fff" textLength="49.4" lengthAdjust="spacingAndGlyphs">Waiting...</text>
<text x="832.5" y="783.3" font-size="11.5" fill="#fff" textLength="109.4" lengthAdjust="spacingAndGlyphs">Mean: 932 016 891,60</text>
<text x="972.6" y="783.3" font-size="11.5" fill="#fff" textLength="111.5" lengthAdjust="spacingAndGlyphs">Sum: 2 796 050 674,80</text>
<text x="1108.7" y="783.3" font-size="11.5" fill="#7fb6dd" textLength="19.1" lengthAdjust="spacingAndGlyphs">CAP</text>
<text x="1150.2" y="783.3" font-size="11.5" fill="#fff" textLength="25.3" lengthAdjust="spacingAndGlyphs">NUM</text>
<text x="1197.8" y="783.3" font-size="11.5" fill="#7fb6dd" textLength="24.6" lengthAdjust="spacingAndGlyphs">SCRL</text>
<rect x="1138" y="772" width="1" height="17" fill="#fff"/>
<rect x="1186" y="772" width="1" height="17" fill="#fff"/>
<rect x="1233" y="772" width="1" height="17" fill="#fff"/>
<path d="M1240,789 L1251,778 M1244,789 L1251,782 M1248,789 L1251,786" stroke="#a9cce6" stroke-width="1"/>
<rect x="0" y="789" width="1252" height="1" fill="#5b5b5b"/>
<rect x="1251" y="0" width="1" height="790" fill="#5b5b5b"/>
</svg>
</body></html>
